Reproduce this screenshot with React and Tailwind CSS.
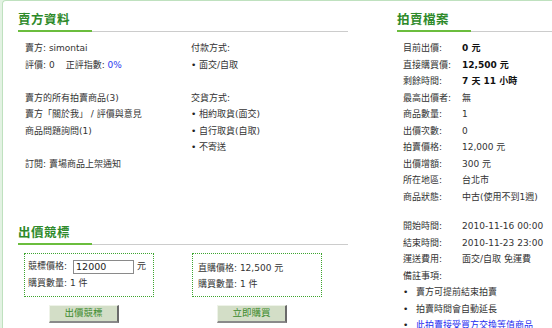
import React from "react";

function Heading({ children, greenW = 74 }) {
  return (
    <div>
      <div className="h-[16px] leading-[16px] text-[12.5px] font-bold tracking-[0.5px] text-[#2e8a2a]">
        {children}
      </div>
      <div className="mt-[2px] flex items-end">
        <div className="h-[2px] bg-[#6bbd3e]" style={{ width: greenW }} />
        <div className="h-px flex-1 bg-[#cccccc]" />
      </div>
    </div>
  );
}

function Row({ children, className = "" }) {
  return <div className={"h-[16.5px] leading-[16.5px] whitespace-nowrap " + className}>{children}</div>;
}

function Blank() {
  return <div className="h-[16.5px]" />;
}

function Bullet({ children, className = "" }) {
  return (
    <Row className={"flex items-center " + className}>
      <span className="w-[8px] text-[#222]">•</span>
      <span>{children}</span>
    </Row>
  );
}

function Info({ label, children, bold }) {
  return (
    <Row className="flex">
      <span className="w-[59px] shrink-0">{label}</span>
      <span className={bold ? "font-bold text-[#111]" : ""}>{children}</span>
    </Row>
  );
}

function RBullet({ children, className = "" }) {
  return (
    <Row className={"flex items-center " + className}>
      <span className="w-[13px] shrink-0 text-[#222]">•</span>
      <span>{children}</span>
    </Row>
  );
}

function GreenButton({ children }) {
  return (
    <div className="ml-[25px] mt-[8px] flex h-[18px] w-[70px] items-center justify-center border-t border-l border-r-2 border-b-2 border-t-[#eef3e8] border-l-[#eef3e8] border-r-[#6a6a6a] border-b-[#8a8a8a] bg-[#d3dec7] text-[9.5px] text-[#3b8a2c]">
      {children}
    </div>
  );
}

export default function App() {
  return (
    <div className="h-[328px] w-[552px] overflow-hidden bg-[#e3f2e3] font-['DejaVu_Sans','Noto_Sans_CJK_TC',sans-serif] text-[9px] text-[#333333]">
      <div className="ml-[2px] flex h-full rounded-tl-[4px] border-l border-t border-[#bfe1bf] bg-white">
        {/* Left section */}
        <div className="ml-[15px] w-[330px] shrink-0 pt-[11px]">
          <Heading>賣方資料</Heading>
          <div className="mt-[8px] flex pl-[7px]">
            <div className="w-[166px] shrink-0">
              <Row>賣方: simontai</Row>
              <Row>
                評價: 0<span className="ml-[11px]">正評指數: </span>
                <span className="text-[#2b3bf0]">0%</span>
              </Row>
              <Blank />
              <Row>賣方的所有拍賣商品(3)</Row>
              <Row>賣方「關於我」 / 評價與意見</Row>
              <Row>商品問題詢問(1)</Row>
              <Blank />
              <Row>訂閱: 賣場商品上架通知</Row>
            </div>
            <div>
              <Row>付款方式:</Row>
              <Bullet>面交/自取</Bullet>
              <Blank />
              <Row>交貨方式:</Row>
              <Bullet>相約取貨(面交)</Bullet>
              <Bullet>自行取貨(自取)</Bullet>
              <Bullet>不寄送</Bullet>
            </div>
          </div>

          <div className="mt-[53px]">
            <Heading>出價競標</Heading>
          </div>

          <div className="mt-[8px] ml-[6px] flex">
            <div className="w-[130px]">
              <div className="h-[44px] border border-dotted border-[#3da52f] px-[3px] pt-[5px]">
                <div className="flex h-[16px] items-center whitespace-nowrap">
                  <span>競標價格:</span>
                  <input
                    readOnly
                    defaultValue="12000"
                    className="ml-[6px] h-[14px] w-[61px] border border-[#8a8a8a] px-[2px] text-[9.5px] text-[#222] outline-none"
                  />
                  <span className="ml-[3px]">元</span>
                </div>
                <div className="h-[16px] leading-[16px] whitespace-nowrap">購買數量: 1 件</div>
              </div>
              <GreenButton>出價競標</GreenButton>
            </div>
            <div className="ml-[38px] w-[130px]">
              <div className="h-[44px] border border-dotted border-[#3da52f] px-[5px] pt-[6px]">
                <div className="h-[16px] leading-[16px] whitespace-nowrap">直購價格: 12,500 元</div>
                <div className="h-[16px] leading-[16px] whitespace-nowrap">購買數量: 1 件</div>
              </div>
              <GreenButton>立即購買</GreenButton>
            </div>
          </div>
        </div>

        {/* Right section */}
        <div className="ml-[49px] flex-1 pt-[11px]">
          <Heading>拍賣檔案</Heading>
          <div className="mt-[8px] pl-[6px]">
            <Info label="目前出價:" bold>0 元</Info>
            <Info label="直接購買價:" bold>12,500 元</Info>
            <Info label="剩餘時間:" bold>7 天 11 小時</Info>
            <Info label="最高出價者:">無</Info>
            <Info label="商品數量:">1</Info>
            <Info label="出價次數:">0</Info>
            <Info label="拍賣價格:">12,000 元</Info>
            <Info label="出價增額:">300 元</Info>
            <Info label="所在地區:">台北市</Info>
            <Info label="商品狀態:">中古(使用不到1週)</Info>
            <div className="mt-[13px]">
              <Info label="開始時間:">2010-11-16 00:00</Info>
              <Info label="結束時間:">2010-11-23 23:00</Info>
              <Info label="運送費用:">面交/自取 免運費</Info>
              <Row>備註事項:</Row>
              <RBullet>賣方可提前結束拍賣</RBullet>
              <RBullet>拍賣時間會自動延長</RBullet>
              <RBullet className="text-[#1a2cf0]">
                <span className="underline">此拍賣接受買方交換等值商品</span>
              </RBullet>
            </div>
          </div>
        </div>
      </div>
    </div>
  );
}
